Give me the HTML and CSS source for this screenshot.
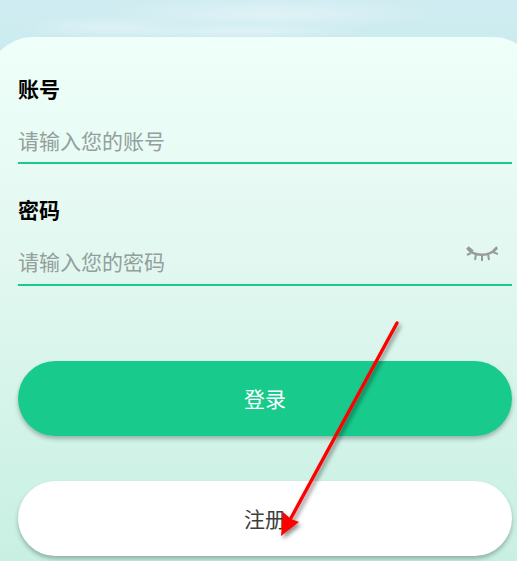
FILE: index.html
```html
<!DOCTYPE html>
<html lang="zh">
<head>
<meta charset="utf-8">
<title>登录</title>
<link rel="stylesheet" href="styles.css">
</head>
<body>
<div class="page">
  <div class="sky"></div>
  <main class="card">
    <section class="field">
      <div class="label">账号</div>
      <div class="input-row"><span class="placeholder">请输入您的账号</span></div>
    </section>
    <section class="field field-second">
      <div class="label">密码</div>
      <div class="input-row">
        <span class="placeholder">请输入您的密码</span>
        <svg class="eye" viewBox="0 0 32 20" width="32" height="20" aria-hidden="true">
          <path d="M1 4 C8 13 23 13 31 4" fill="none" stroke="#979c99" stroke-width="2.6"/>
          <path d="M2 3 L7 7 M5 9 L1 11 M10 10 L9 16 M16 11 L16 17 M22 10 L23 16 M27 8 L32 10 M31 3 L27 7" fill="none" stroke="#979c99" stroke-width="2"/>
        </svg>
      </div>
    </section>
    <button class="btn btn-primary" type="button">登录</button>
    <button class="btn btn-secondary" type="button">注册</button>
  </main>
  <svg class="arrow" viewBox="0 0 517 561" width="517" height="561" aria-hidden="true">
    <defs>
      <filter id="arrow-shadow" x="-30%" y="-10%" width="160%" height="120%">
        <feDropShadow dx="2" dy="3" stdDeviation="2" flood-color="#000" flood-opacity="0.45"/>
      </filter>
    </defs>
    <g filter="url(#arrow-shadow)">
      <path d="M397 323 L291 518" fill="none" stroke="#fe0000" stroke-width="3.4" stroke-linecap="round"/>
      <path d="M281 536 L283 512 L291 519 L299 522 Z" fill="#fe0000"/>
    </g>
  </svg>
</div>
</body>
</html>
```
FILE: styles.css
```css
* { box-sizing: border-box; }
html, body { margin: 0; padding: 0; }
body {
  width: 517px;
  height: 561px;
  overflow: hidden;
  font-family: "Noto Sans CJK SC", "Noto Sans", sans-serif;
}
.page {
  position: relative;
  width: 517px;
  height: 561px;
  overflow: hidden;
  background: #cdecf0;
}
.sky {
  height: 60px;
  margin-bottom: -23px;
  background:
    radial-gradient(ellipse 90px 12px at 110px 27px, rgba(226,243,247,0.8) 0%, rgba(226,243,247,0) 100%),
    radial-gradient(ellipse 170px 16px at 270px 14px, rgba(226,243,247,0.9) 0%, rgba(226,243,247,0) 100%),
    radial-gradient(ellipse 130px 8px at 240px 31px, rgba(226,243,247,0.9) 0%, rgba(226,243,247,0) 100%),
    linear-gradient(180deg, #d0ecf2 0%, #c9ecee 100%);
}
.card {
  width: 550px;
  height: 524px;
  margin-left: -12px;
  padding: 37px 26px 0 30px;
  border-radius: 45px 45px 0 0;
  background: linear-gradient(180deg, #effffa 0%, #e3f8f1 40%, #c8f0e2 100%);
}
.field-second { margin-top: 31px; }
.label {
  height: 30px;
  font-size: 21px;
  line-height: 28px;
  font-weight: 700;
  color: #000;
}
.input-row {
  display: flex;
  align-items: center;
  justify-content: space-between;
  height: 60px;
  padding-top: 14px;
  border-bottom: 2px solid #19c98e;
}
.field-second .input-row {
  height: 61px;
  padding-top: 13px;
}
.placeholder {
  font-size: 21px;
  line-height: 30px;
  color: #93a09b;
}
.eye {
  margin: -14px 14px 0 0;
}
.btn {
  display: block;
  width: 494px;
  height: 75px;
  padding: 0 0 2px;
  border: 0;
  border-radius: 38px;
  font-family: inherit;
  font-size: 21px;
  box-shadow: 0 3px 4px rgba(60, 90, 80, 0.4);
}
.btn-primary {
  margin-top: 75px;
  background: #18ca8c;
  color: #fff;
}
.btn-secondary {
  margin-top: 45px;
  background: #fff;
  color: #3d3d3d;
}
.arrow {
  position: absolute;
  left: 0;
  top: 0;
  pointer-events: none;
}
```
